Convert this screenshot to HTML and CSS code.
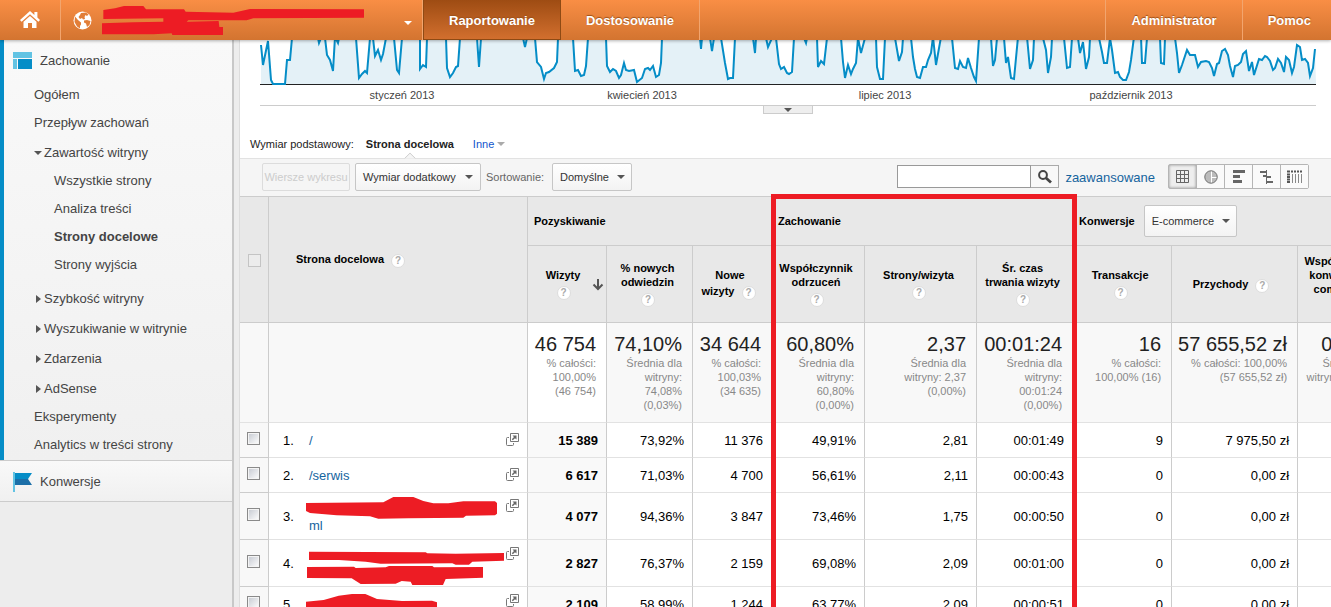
FILE: index.html
```html
<!DOCTYPE html>
<html lang="pl">
<head>
<meta charset="utf-8">
<title>Strony docelowe</title>
<link rel="stylesheet" href="styles.css">
</head>
<body>
<svg class="defs" aria-hidden="true">
  <symbol id="popout" viewBox="0 0 13 13">
    <path d="M4.500 .5h8v8h-8z" fill="#fff" stroke="#777"/>
    <path d="M3 4.500H1.500q-1 0-1 1v6q0 1 1 1h5q1 0 1-1V10" fill="none" stroke="#777"/>
    <path d="M6.500 2.500h4v4L9 5.200 6.800 7.300 5.800 6.300 8 4z" fill="#666"/>
  </symbol>
</svg>
<header class="topbar">
  <a class="home" href="#" aria-label="Strona główna">
    <svg width="20" height="18" viewBox="0 0 20 18" fill="#fff"><path d="M10 0 0 9l1.600 1.800L10 3.300l8.400 7.500L20 9l-2.600-2.400V1h-3v2.900z"/><path d="M10 5 3.500 10.800V17H8v-5h4v5h4.500v-6.200z"/></svg>
  </a>
  <button class="account" type="button" aria-label="Wybór konta">
    <svg width="19" height="19" viewBox="0 0 19 19"><circle cx="9.500" cy="9.500" r="9" fill="#fff"/><path d="M2 5.500 5 9l3 2.500v2l-1 1.500v2.500L4 15.500 1.500 11zM8 2l5-.5 2.500 2L14 5l-1.500-1-1 2 .5 2-2 .5-1-1.500-2 1L5.500 6 7 4zM11 9.500l3-.5 3.500 1-1 4-2.500 2-1-3.500-2-1z" fill="#e27e38"/></svg>
    <svg class="account-mask" width="262" height="29" viewBox="306 15 786 87" fill="#ed1c24"><path d="M310 27 345 22 372 15h58l8 10h114l5 7 143 3 50-11 342 1v25l-332 2-20 6H565l-5 4 96-2 2 18h11v24H517l-2-5-55 3H306V67l94-3 90-2V52l-180 2z"/></svg>
    <span class="caret"></span>
  </button>
  <nav class="tabs">
    <a class="tab active" href="#">Raportowanie</a>
    <a class="tab" href="#">Dostosowanie</a>
  </nav>
  <nav class="tools">
    <a class="tab" href="#">Administrator</a>
    <a class="tab" href="#">Pomoc</a>
  </nav>
</header>
<div class="layout">
<aside class="sidebar">
  <section class="section current">
    <h2 class="section-title"><svg width="20" height="18" viewBox="0 0 20 18"><path d="M0 0h19v6H0zM0 7h4v10H0z" fill="#62c3e3"/><path d="M5 7h14v10H5z" fill="#058dc7"/></svg>Zachowanie</h2>
    <ul class="menu">
      <li><a href="#">Ogółem</a></li>
      <li><a href="#">Przepływ zachowań</a></li>
      <li class="group open"><a href="#">Zawartość witryny</a>
        <ul class="submenu">
          <li><a href="#">Wszystkie strony</a></li>
          <li><a href="#">Analiza treści</a></li>
          <li><a class="selected" href="#">Strony docelowe</a></li>
          <li><a href="#">Strony wyjścia</a></li>
        </ul>
      </li>
      <li class="group"><a href="#">Szybkość witryny</a></li>
      <li class="group"><a href="#">Wyszukiwanie w witrynie</a></li>
      <li class="group"><a href="#">Zdarzenia</a></li>
      <li class="group"><a href="#">AdSense</a></li>
      <li><a href="#">Eksperymenty</a></li>
      <li><a href="#">Analytics w treści strony</a></li>
    </ul>
  </section>
  <section class="section closed">
    <h2 class="section-title"><svg width="20" height="20" viewBox="0 0 20 20"><path d="M0 0h2v20H0z" fill="#62c3e3"/><path d="M2 1h17l-4 6H2z" fill="#058dc7"/><path d="M2 7h13l4 6H2z" fill="#1c6fa8"/></svg>Konwersje</h2>
  </section>
</aside>
<main class="report">
  <section class="chart">
    <svg class="plot" viewBox="260 40 1056 45" preserveAspectRatio="none" role="img" aria-label="Wizyty w 2013 roku">
      <defs><path id="line" d="M261 45L263 65L268 41L271 80L273 84H285L287 60H290L292 38H318L319 43L321 38H325L327 55L330 60L333 71L335 37L338 43L339 38H356L359 78L362 74L365 71L367 73L370 38H373L375 56L378 50L381 60L383 54L386 38H394L397 70L399 73L402 38H420V69L423 65L426 67L427 38H446L447 68L450 77L453 73L456 67L458 66L460 38H477L479 67L481 38H523L525 47L527 38H535L537 62L541 67L544 79L546 73L549 72L554 68L557 62L558 38H573L575 71L578 70L581 76L584 75L586 66L588 38H606L607 66L610 72L613 69L616 71L619 78L621 75L624 63L626 70L629 71L634 70L637 82L642 78L645 69L648 68L650 70L653 66L656 77L659 75L661 63L662 38H700L701 49L702 38H710L712 51L714 38H721L725 63L728 79L730 78H733L735 38H753L755 53L756 38H766L768 47L772 38H776L779 64L781 69L784 67L787 73L789 74L792 72L794 38H804L806 43L807 38H817L818 67L821 61L824 64L827 38H841L843 62L845 78L848 65L851 74L853 69L856 63L858 38L861 53L865 38H876L877 67L880 79H883L885 38H895L899 61L902 52L903 38H911L913 57L915 69L917 77L920 78L923 67H926L928 60L931 53L933 37L936 65L941 37L952 38L955 68L958 69L960 61L963 67L966 68L968 58L971 68L974 77L976 81L979 38H991L993 66L995 60L997 38H1004L1006 63L1008 57L1011 78L1014 79L1018 37H1027L1030 69L1033 60L1034 38H1043L1046 50L1048 73L1051 57L1052 38H1064L1067 68L1070 67L1072 38H1078L1080 53L1083 42L1086 69L1089 57L1090 38H1099L1102 52L1104 63H1107L1110 38L1112 50L1115 73L1118 72L1120 77L1123 80H1126L1129 72L1131 60L1134 37H1141L1142 63H1145L1147 38H1160L1161 63L1164 64L1165 38H1175L1177 53L1179 73L1182 65L1187 50L1190 55H1195L1198 67L1201 62L1206 61L1209 62L1212 68L1214 76L1217 64L1219 63L1222 51L1225 49L1228 55L1230 66L1233 77L1235 66L1238 65L1241 62L1243 54L1246 51L1249 71L1252 62L1254 75L1259 59L1262 60L1265 56L1267 57L1270 61L1273 70L1275 68L1278 59L1281 63L1284 72L1286 57L1289 60L1292 73L1294 67L1297 45L1300 47L1302 60L1305 59L1308 63L1310 76L1313 68L1315 49"/></defs>
      <path class="area" d="M261 84L261 45L263 65L268 41L271 80L273 84H285L287 60H290L292 38H325L327 55L330 60L333 71L335 38H356L359 78L362 74L365 71L367 73L370 38H373L375 56L378 50L381 60L383 54L386 38H394L397 70L399 73L402 38H420V69L423 65L426 67L427 38H446L447 68L450 77L453 73L456 67L458 66L460 38H477L479 67L481 38H535L537 62L541 67L544 79L546 73L549 72L554 68L557 62L558 38H573L575 71L578 70L581 76L584 75L586 66L588 38H606L607 66L610 72L613 69L616 71L619 78L621 75L624 63L626 70L629 71L634 70L637 82L642 78L645 69L648 68L650 70L653 66L656 77L659 75L661 63L662 38H721L725 63L728 79L730 78H733L735 38H776L779 64L781 69L784 67L787 73L789 74L792 72L794 38H817L818 67L821 61L824 64L827 38H841L843 62L845 78L848 65L851 74L853 69L856 63L858 38L861 53L865 38H876L877 67L880 79H883L885 38H895L899 61L902 52L903 38H911L913 57L915 69L917 77L920 78L923 67H926L928 60L931 53L933 37L936 65L941 37L952 38L955 68L958 69L960 61L963 67L966 68L968 58L971 68L974 77L976 81L979 38H991L993 66L995 60L997 38H1004L1006 63L1008 57L1011 78L1014 79L1018 37H1027L1030 69L1033 60L1034 38H1043L1046 50L1048 73L1051 57L1052 38H1064L1067 68L1070 67L1072 38H1078L1080 53L1083 42L1086 69L1089 57L1090 38H1099L1102 52L1104 63H1107L1110 38L1112 50L1115 73L1118 72L1120 77L1123 80H1126L1129 72L1131 60L1134 37H1141L1142 63H1145L1147 38H1160L1161 63L1164 64L1165 38H1175L1177 53L1179 73L1182 65L1187 50L1190 55H1195L1198 67L1201 62L1206 61L1209 62L1212 68L1214 76L1217 64L1219 63L1222 51L1225 49L1228 55L1230 66L1233 77L1235 66L1238 65L1241 62L1243 54L1246 51L1249 71L1252 62L1254 75L1259 59L1262 60L1265 56L1267 57L1270 61L1273 70L1275 68L1278 59L1281 63L1284 72L1286 57L1289 60L1292 73L1294 67L1297 45L1300 47L1302 60L1305 59L1308 63L1310 76L1313 68L1315 49L1316 84z"/>
      <path d="M260 84.500H1316" stroke="#222"/>
      <use class="series" href="#line"/>
    </svg>
    <div class="axis"><span>styczeń 2013</span><span>kwiecień 2013</span><span>lipiec 2013</span><span>październik 2013</span></div>
    <button class="handle" type="button" aria-label="Rozwiń wykres"><span class="caret"></span></button>
  </section>
  <div class="dimensions">
    <span class="dim-label">Wymiar podstawowy:</span>
    <strong class="dim-current">Strona docelowa</strong>
    <a class="dim-other" href="#">Inne <span class="caret"></span></a>
  </div>
  <div class="toolbar">
    <button class="btn rows-btn" type="button" disabled>Wiersze wykresu</button>
    <button class="btn menu-btn" type="button">Wymiar dodatkowy <span class="caret"></span></button>
    <label class="sort-label" for="sort">Sortowanie:</label>
    <span class="pick sort-pick"><select class="btn" id="sort"><option>Domyślne</option></select><span class="caret"></span></span>
    <form class="search">
      <input type="text" aria-label="Szukaj">
      <button type="button" aria-label="Szukaj"><svg width="14" height="14" viewBox="0 0 14 14" fill="none" stroke="#444"><circle cx="5" cy="5" r="3.900" stroke-width="2"/><path d="m8 8 5 4.500" stroke-width="2.800"/></svg></button>
    </form>
    <a class="advanced" href="#">zaawansowane</a>
    <div class="views">
      <button class="on" type="button" aria-label="Dane"><svg width="14" height="14" viewBox="0 0 14 14"><path d="M.5.5h12v12H.5zM4.500.5v12M8.500.5v12M.5 4.500h12M.5 8.500h12" fill="none" stroke="#666"/></svg></button>
      <button type="button" aria-label="Procenty"><svg width="14" height="14" viewBox="0 0 14 14"><circle cx="7" cy="7" r="6.500" fill="#bbb"/><path d="M7 .5v13A6.500 6.500 0 0 1 7 .5zM7 .5A6.500 6.500 0 0 0 7 13.500" fill="#888"/><path d="M7.500 1v12M7 7.500h6" stroke="#fff"/><circle cx="7" cy="7" r="6.200" fill="none" stroke="#777"/></svg></button>
      <button type="button" aria-label="Skuteczność"><svg width="14" height="14" viewBox="0 0 14 14" fill="#666"><path d="M1 0h12v3H1zM1 5h7v3H1zM1 10h9v3H1z"/></svg></button>
      <button type="button" aria-label="Porównanie"><svg width="14" height="14" viewBox="0 0 14 14" fill="#666"><path d="M6 0h1v14H6zM0 1h6v2H0zM3 5h3v2H3zM7 6h4v2H7zM7 11h6v2H7z"/></svg></button>
      <button type="button" aria-label="Tabela przestawna"><svg width="15" height="13" viewBox="0 0 15 13"><path d="M0 1.500h3M4 1.500h2M7 1.500h2M10 1.500h2M13 1.500h2M0 4.500h3M0 7h3M0 9.500h3M0 12h3" stroke="#555" stroke-width="1.800"/><path d="M5.500 4v9M8.500 4v9M11.500 4v9M14.500 4v9" stroke="#888" stroke-width="1"/></svg></button>
    </div>
  </div>
  <div class="table-wrap">
  <table class="data">
    <colgroup><col class="c-check"><col class="c-page"><col class="c-visits"><col class="c-newpct"><col class="c-new"><col class="c-bounce"><col class="c-pages"><col class="c-time"><col class="c-trans"><col class="c-rev"><col class="c-conv"></colgroup>
    <thead>
      <tr class="groups">
        <th class="check-head" rowspan="2"><input class="faint" type="checkbox" aria-label="Zaznacz wszystkie"></th>
        <th class="page-head" rowspan="2">Strona docelowa <span class="help">?</span></th>
        <th class="group-head" colspan="3">Pozyskiwanie</th>
        <th class="group-head" colspan="3">Zachowanie</th>
        <th class="group-head" colspan="3"><div class="conv"><label for="conv">Konwersje</label><span class="pick conv-pick"><select class="btn" id="conv"><option>E-commerce</option></select><span class="caret"></span></span></div></th>
      </tr>
      <tr class="metrics">
        <th><div class="sorted"><span>Wizyty<br><span class="help">?</span></span><svg width="12" height="12" viewBox="0 0 12 12" fill="none" stroke="#555" stroke-width="2"><path d="M6 0v10M1.500 5.500 6 10l4.500-4.500"/></svg></div></th>
        <th>% nowych<br>odwiedzin<br><span class="help">?</span></th>
        <th>Nowe<br>wizyty <span class="help">?</span></th>
        <th>Współczynnik<br>odrzuceń<br><span class="help">?</span></th>
        <th>Strony/wizyta<br><span class="help">?</span></th>
        <th>Śr. czas<br>trwania wizyty<br><span class="help">?</span></th>
        <th>Transakcje<br><span class="help">?</span></th>
        <th>Przychody <span class="help">?</span></th>
        <th>Współczynnik<br>konwersji e-<br>commerce<br><span class="help">?</span></th>
      </tr>
    </thead>
    <tbody>
      <tr class="summary">
        <td></td><td></td>
        <td class="key"><b>46 754</b>% całości:<br>100,00%<br>(46 754)</td>
        <td><b>74,10%</b>Średnia dla<br>witryny:<br>74,08%<br>(0,03%)</td>
        <td><b>34 644</b>% całości:<br>100,03%<br>(34 635)</td>
        <td><b>60,80%</b>Średnia dla<br>witryny:<br>60,80%<br>(0,00%)</td>
        <td><b>2,37</b>Średnia dla<br>witryny: 2,37<br>(0,00%)</td>
        <td><b>00:01:24</b>Średnia dla<br>witryny:<br>00:01:24<br>(0,00%)</td>
        <td><b>16</b>% całości:<br>100,00% (16)</td>
        <td><b>57 655,52 zł</b>% całości: 100,00%<br>(57 655,52 zł)</td>
        <td><b>0,03%</b>Średnia dla<br>witryny: 0,03%</td>
      </tr>
      <tr class="short">
        <td class="check"><input type="checkbox" aria-label="Wiersz 1"></td>
        <td class="page"><div><span class="no">1.</span><a href="#">/</a><svg class="pop" width="13" height="13"><use href="#popout"/></svg></div></td>
        <td class="key">15 389</td><td>73,92%</td><td>11 376</td><td>49,91%</td><td>2,81</td><td>00:01:49</td><td>9</td><td>7 975,50 zł</td><td></td>
      </tr>
      <tr class="short">
        <td class="check"><input type="checkbox" aria-label="Wiersz 2"></td>
        <td class="page"><div><span class="no">2.</span><a href="#">/serwis</a><svg class="pop" width="13" height="13"><use href="#popout"/></svg></div></td>
        <td class="key">6 617</td><td>71,03%</td><td>4 700</td><td>56,61%</td><td>2,11</td><td>00:00:43</td><td>0</td><td>0,00 zł</td><td></td>
      </tr>
      <tr class="tall">
        <td class="check"><input type="checkbox" aria-label="Wiersz 3"></td>
        <td class="page"><div><span class="no">3.</span><a href="#"><svg class="mask first" width="191" height="22" viewBox="198 528 573 66"><path d="M198 546 430 544 460 528h60l30 12 30 7h45l45-6h95l6 5v32l-6 5-87 1-8 6-165 2-90 1-25-7-100-3-80-7-12-6z"/></svg>ml</a><svg class="pop" width="13" height="13"><use href="#popout"/></svg></div></td>
        <td class="key">4 077</td><td>94,36%</td><td>3 847</td><td>73,46%</td><td>1,75</td><td>00:00:50</td><td>0</td><td>0,00 zł</td><td></td>
      </tr>
      <tr class="tall">
        <td class="check"><input type="checkbox" aria-label="Wiersz 4"></td>
        <td class="page"><div><span class="no">4.</span><a href="#" aria-label="Strona 4"><svg class="mask double" width="198" height="34" viewBox="201 690 594 102"><path d="M210 692 560 694 565 697 650 698 798 696v23l-98 3-10 9h-40l-10-4-215 1-45-6-80-5h-90zM204 738l141-1 5 4 90-2 10-4h130l5 4 147-1v32l-112 4-8 18h-92l-5-10-27-2-18 8-105 1-27-17-134-1z"/></svg></a><svg class="pop" width="13" height="13"><use href="#popout"/></svg></div></td>
        <td class="key">2 827</td><td>76,37%</td><td>2 159</td><td>69,08%</td><td>2,09</td><td>00:01:00</td><td>0</td><td>0,00 zł</td><td></td>
      </tr>
      <tr class="short">
        <td class="check"><input type="checkbox" aria-label="Wiersz 5"></td>
        <td class="page"><div><span class="no">5.</span><a href="#" aria-label="Strona 5"><svg class="mask" width="131" height="22" viewBox="192 815 393 66"><path d="M192 838 245 833 290 820 330 815h40l35 15 75 6 90-1 15 5v41H192z"/></svg></a><svg class="pop" width="13" height="13"><use href="#popout"/></svg></div></td>
        <td class="key">2 109</td><td>58,99%</td><td>1 244</td><td>63,77%</td><td>2,09</td><td>00:00:51</td><td>0</td><td>0,00 zł</td><td></td>
      </tr>
    </tbody>
  </table>
  <div class="highlight"></div>
  </div>
</main>
</div>
</body>
</html>
```
FILE: styles.css
```css
* { box-sizing: border-box; }

body {
  margin: 0;
  height: 100vh;
  overflow: hidden;
  display: flex;
  flex-direction: column;
  font: 11px/14px "Liberation Sans", Arial, sans-serif;
  color: #222;
  background: #ededed;
}

a { color: inherit; text-decoration: none; }
ul { list-style: none; margin: 0; padding: 0; }
button, input, select { font: inherit; margin: 0; }
svg { flex: none; }
.defs { position: absolute; width: 0; height: 0; }

.caret {
  display: inline-block;
  border: 4px solid transparent;
  border-top-color: #555;
  border-bottom: 0;
}

/* top bar */
.topbar {
  flex: none;
  display: flex;
  height: 40px;
  position: relative;
  z-index: 2;
  background: linear-gradient(#f98e45, #d37430);
  box-shadow: 0 1px 3px rgba(0, 0, 0, .3);
}
.home {
  width: 61px;
  display: flex;
  align-items: center;
  justify-content: center;
  border-right: 1px solid #f2a56e;
}
.account {
  width: 362px;
  display: flex;
  align-items: center;
  padding: 0 10px 0 12px;
  border: 0;
  border-right: 1px solid #f2a56e;
  background: none;
}
.account-mask { margin: 0 auto 0 10px; }
.account .caret { border-top-color: #fff; margin-top: 6px; }
.tabs, .tools { display: flex; }
.tools { margin-left: auto; }
.tab {
  height: 40px;
  padding: 0 25px;
  font-size: 13px;
  font-weight: bold;
  line-height: 42px;
  color: #fff;
  text-shadow: 0 -1px 1px #9c5018;
  border-right: 1px solid #f2a56e;
}
.tools .tab { border-right: 0; border-left: 1px solid #f2a56e; }
.tools .tab:last-child { padding-right: 20px; }
.tabs .tab.active {
  border: 1px solid #8e4a14;
  border-top: 0;
  background: linear-gradient(#9e4c13, #d26f2e);
}

.layout { flex: 1; display: flex; min-height: 0; }

/* sidebar */
.sidebar {
  flex: none;
  width: 234px;
  border-right: 2px solid #c8c8c8;
  font-size: 13px;
  color: #444;
}
.section-title {
  display: flex;
  align-items: center;
  gap: 7px;
  margin: 0;
  height: 41px;
  padding-top: 1px;
  font-size: 13px;
  font-weight: normal;
}
.current {
  border-left: 4px solid #058dc7;
  padding-bottom: 1px;
  background: linear-gradient(#f9f9f9, #f0f0f0);
}
.current .section-title { padding-left: 9px; }
.closed {
  border-top: 1px solid #ccc;
  border-bottom: 1px solid #ccc;
  background: linear-gradient(#f9f9f9, #f0f0f0);
}
.closed .section-title { height: 40px; padding-left: 13px; }
.menu a { display: block; line-height: 28px; padding-left: 30px; }
.group { margin-top: 2px; }
.menu .group > a { display: flex; align-items: center; gap: 3px; }
.group > a::before {
  content: "";
  margin: 0 0 0 2px;
  border: 4px solid transparent;
  border-left: 5px solid #555;
  border-right: 0;
}
.group.open > a::before {
  margin: 0 -1px 0 0;
  border: 4px solid transparent;
  border-top-color: #555;
  border-bottom: 0;
}
.submenu { padding-bottom: 4px; }
.menu .submenu a { padding-left: 50px; }
.submenu .selected { font-weight: bold; }

/* report */
.report {
  flex: 1;
  min-width: 0;
  display: flex;
  flex-direction: column;
  margin-left: 5px;
  border-left: 1px solid #ddd;
  background: #fff;
}
.chart { padding: 0 15px 0 20px; }
.plot { display: block; width: 100%; height: 45px; }
.area { fill: #e4f1f7; }
.series { fill: none; stroke: #058dc7; stroke-width: 2; }
.axis {
  display: grid;
  grid-template-columns: 284fr 196fr 290fr 202fr 84fr;
  height: 21px;
  padding-top: 3px;
  text-align: center;
  color: #444;
  border-bottom: 1px solid #ccc;
}
.handle {
  display: flex;
  align-items: center;
  justify-content: center;
  width: 50px;
  height: 8px;
  margin: 0 auto;
  padding: 0;
  border: 1px solid #ccc;
  border-top: 0;
  background: #eee;
}
.dimensions {
  flex: none;
  display: flex;
  align-items: flex-end;
  height: 45px;
  padding: 0 10px 7px;
  border-bottom: 1px solid #e2e2e2;
}
.dim-current { position: relative; margin: 0 19px 0 12px; }
.dim-current::after {
  content: "";
  position: absolute;
  left: 50%;
  bottom: -12px;
  width: 8px;
  height: 8px;
  border: 1px solid #ccc;
  border-right: 0;
  border-bottom: 0;
  background: #f5f5f5;
  clip-path: polygon(0 0, 100% 0, 0 100%);
  transform: translateX(-50%) rotate(45deg);
}
.dim-other { color: #15c; }
.dim-other .caret { border-top-color: #aaa; vertical-align: 2px; }

.toolbar {
  flex: none;
  display: flex;
  align-items: center;
  height: 37px;
  padding: 0 22px 2px;
  background: #f5f5f5;
}
.btn {
  height: 28px;
  border: 1px solid #c6c6c6;
  border-radius: 2px;
  background: linear-gradient(#fff, #f3f3f3);
  color: #333;
  padding: 0 7px;
  white-space: nowrap;
}
.rows-btn { width: 88px; padding: 0; border-color: #dcdcdc; background: #f5f5f5; color: #ccc; }
.menu-btn { width: 126px; margin: 0 5px; display: flex; align-items: center; justify-content: space-between; }
.sort-label { color: #666; width: 66px; }
.pick { position: relative; display: inline-block; }
.pick select { appearance: none; display: block; width: 100%; }
.pick .caret { position: absolute; right: 7px; top: 50%; margin-top: -2px; pointer-events: none; }
.sort-pick { width: 80px; }
.search { display: flex; margin-left: auto; }
.search input { width: 134px; height: 23px; border: 1px solid #999; background: #fff; }
.search button { width: 28px; height: 23px; padding: 0; border: 1px solid #aaa; border-left: 0; background: #f8f8f8; display: flex; align-items: center; justify-content: center; }
.advanced { margin: 0 13px 0 6px; padding-top: 2px; font-size: 13px; color: #15649e; }
.views { display: flex; border: 1px solid #b5b5b5; border-radius: 2px; }
.views button {
  width: 28px;
  height: 23px;
  padding: 0;
  display: flex;
  align-items: center;
  justify-content: center;
  border: 0;
  border-left: 1px solid #b5b5b5;
  background: #fafafa;
}
.views .on { width: 27px; border-left: 0; background: #eee; box-shadow: inset 0 0 3px rgba(0, 0, 0, .4); }

/* data table */
.table-wrap { position: relative; flex: 1; min-height: 0; overflow: hidden; clip-path: inset(-2px 0 0 0); overflow: visible; }
.data {
  table-layout: fixed;
  width: 1149px;
  border-spacing: 0;
  border-top: 1px solid #ccc;
  font-size: 13px;
  color: #000;
}
.c-check { width: 29px; }
.c-page { width: 259px; }
.c-visits, .c-new { width: 79px; }
.c-newpct { width: 86px; }
.c-bounce { width: 93px; }
.c-pages { width: 112px; }
.c-time { width: 96px; }
.c-trans { width: 99px; }
.c-rev { width: 126px; }
.c-conv { width: 91px; }
.data th {
  padding: 1px 6px 0 2px;
  border-right: 1px solid #ccc;
  border-bottom: 1px solid #ccc;
  background: #e8e8e8;
  font-size: 11px;
  line-height: 14px;
  white-space: nowrap;
}
.groups { height: 49px; }
.metrics { height: 77px; }
.data .check-head { padding: 0; }
.data .page-head { padding-left: 27px; text-align: left; }
.data .group-head { padding: 0 0 0 6px; text-align: left; }
.conv { display: flex; align-items: center; gap: 9px; }
.conv-pick { width: 93px; }
.conv-pick .btn { height: 32px; font-weight: normal; }
.help {
  display: inline-block;
  width: 14px;
  height: 14px;
  margin: 4px 3px 2px 4px;
  border: 1px solid #ddd;
  border-radius: 50%;
  background: #fff;
  color: #aaa;
  font-size: 10px;
  line-height: 12px;
  text-align: center;
  vertical-align: middle;
}
.sorted { display: flex; align-items: center; padding-left: 4px; margin-right: -4px; }
.sorted > span { flex: 1; }
.data td {
  padding: 2px 8px 0 2px;
  border-right: 1px solid #ccc;
  border-bottom: 1px solid #e2e2e2;
  text-align: right;
  white-space: nowrap;
}
.data td.check { padding: 0 4px 5px 2px; text-align: center; background: #f8f8f8; border-bottom-color: #ccc; }
.data td.key { font-weight: bold; background: #f9f9f9; }
.short { height: 35px; }
.tall { height: 47px; }
.summary { height: 100px; }
.data .summary td {
  padding: 9px 10px 0 2px;
  vertical-align: top;
  background: #f8f8f8;
  color: #888;
  font-size: 11px;
  font-weight: normal;
  line-height: 14px;
}
.data .summary td.key { background: #fff; }
.summary b { display: block; color: #222; font-size: 20px; font-weight: normal; line-height: 24px; }
input[type="checkbox"] {
  appearance: none;
  display: inline-block;
  width: 13px;
  height: 13px;
  margin: 0;
  border: 1px solid #8a8a8a;
  outline: 1px solid #f4f4f4;
  outline-offset: -2px;
  background: linear-gradient(135deg, #c4c8d0, #fff);
  vertical-align: middle;
}
input[type="checkbox"].faint { border-color: #c4c4c4; background: #ececec; outline: 0; }
.data td.page { padding: 1px 8px 0 14px; text-align: left; }
.page > div { display: flex; align-items: center; }
.page .no { width: 26px; }
.page a { flex: 1; color: #15649e; line-height: 16px; }
.page .pop { align-self: flex-start; }
.mask { display: block; margin-left: -3px; fill: #ed1c24; }
.mask.first { margin-top: -2px; margin-bottom: -1px; }
.mask.double { margin-top: 4px; margin-bottom: -4px; }
.highlight {
  position: absolute;
  top: -2px;
  bottom: -5px;
  left: 531px;
  width: 306px;
  border: 5px solid #ed1c24;
  pointer-events: none;
}
```
